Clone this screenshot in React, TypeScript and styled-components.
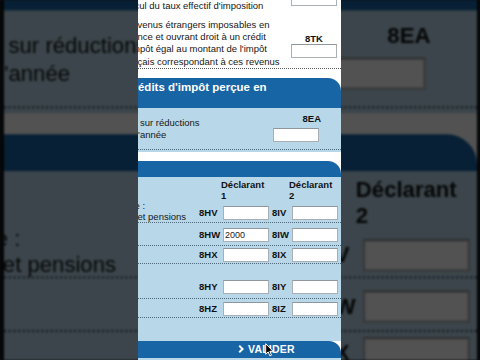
import React from "react";
import styled, { createGlobalStyle } from "styled-components";

const Global = createGlobalStyle`
  html, body { margin: 0; padding: 0; background: #000; }
  body { font-family: "Liberation Sans", Arial, Helvetica, sans-serif; }
`;

const NAVY = "#1865a6";
const LIGHT = "#b8d8ea";

const Screen = styled.div`
  position: relative;
  width: 480px;
  height: 360px;
  overflow: hidden;
  background: #0c0f12;
  display: flex;
  padding-left: 138px;
  box-sizing: border-box;
`;

const Backdrop = styled.div`
  position: absolute;
  inset: 0;
  overflow: hidden;
  background: #0c0f12;
  filter: blur(1px) brightness(0.32);
`;

const BackdropScale = styled.div`
  position: absolute;
  left: 3.5px;
  top: -240.6px;
  transform-origin: 0 0;
  transform: scale(2.33);
`;

const Frame = styled.div<{ $clip?: boolean }>`
  position: relative;
  flex: none;
  width: 203px;
  height: 360px;
  background: #fff;
  overflow: ${(p) => (p.$clip ? "hidden" : "visible")};
  font-family: "Liberation Sans", Arial, Helvetica, sans-serif;
  font-size: 9.5px;
  color: #161616;
  z-index: 1;
`;

const Page = styled.div`
  display: flex;
  flex-direction: column;
  margin-top: -14px;
`;

const Row = styled.div<{ $h: number; $dots?: string }>`
  display: flex;
  justify-content: space-between;
  align-items: flex-start;
  height: ${(p) => p.$h}px;
  border-bottom: ${(p) => (p.$dots ? `1px dotted ${p.$dots}` : "none")};
`;

const TextBlock = styled.div<{ $pt: number; $lh: number }>`
  flex: 1;
  padding-top: ${(p) => p.$pt}px;
  line-height: ${(p) => p.$lh}px;
  white-space: nowrap;
`;

const Line = styled.span<{ $indent: number }>`
  display: block;
  margin-left: ${(p) => p.$indent}px;
`;

const RightCol = styled.div<{ $w: number; $mr: number; $align: string }>`
  flex: none;
  width: ${(p) => p.$w}px;
  margin-right: ${(p) => p.$mr}px;
  display: flex;
  flex-direction: column;
  align-items: ${(p) => p.$align};
`;

const Code = styled.div<{ $mt: number }>`
  margin-top: ${(p) => p.$mt}px;
  font-weight: bold;
  font-size: 9.5px;
  line-height: 11px;
  color: #111;
`;

const Field = styled.div<{ $mt: number; $self?: string }>`
  margin-top: ${(p) => p.$mt}px;
  align-self: ${(p) => p.$self || "auto"};
  width: 46px;
  height: 14px;
  box-sizing: border-box;
  background: #fff;
  border: 1px solid #a9b0b5;
  border-top-color: #8f979d;
  font-size: 9px;
  line-height: 12px;
  padding-left: 1px;
  color: #222;
`;

const Header = styled.div<{ $h: number; $mt: number }>`
  margin-top: ${(p) => p.$mt}px;
  height: ${(p) => p.$h}px;
  box-sizing: border-box;
  padding-top: 2px;
  background: ${NAVY};
  border-top-right-radius: 13px;
  color: #fff;
  font-weight: bold;
  font-size: 11.5px;
  line-height: 14px;
  white-space: nowrap;
`;

const Panel = styled.div<{ $pb: number }>`
  background: ${LIGHT};
  padding-bottom: ${(p) => p.$pb}px;
  display: flex;
  flex-direction: column;
`;

const GridRow = styled.div<{ $h: number; $dots?: boolean }>`
  display: grid;
  grid-template-columns: 59px 26px 46px 23px 46px 3px;
  align-items: start;
  height: ${(p) => p.$h}px;
  border-bottom: ${(p) => (p.$dots ? "1px dotted #4f687c" : "none")};
`;

const CellText = styled.div`
  line-height: 11.5px;
  white-space: nowrap;
`;

const GridLabel = styled.div<{ $mt: number; $pl: number }>`
  margin-top: ${(p) => p.$mt}px;
  padding-left: ${(p) => p.$pl}px;
  font-weight: bold;
  line-height: 14px;
  color: #111;
  white-space: nowrap;
`;

const ColHead = styled.div<{ $ml: number }>`
  margin-left: ${(p) => p.$ml}px;
  padding-top: 2.5px;
  font-weight: bold;
  line-height: 11px;
  color: #111;
  white-space: nowrap;
`;

const Bar = styled.div`
  height: 17px;
  background: ${NAVY};
  border-top-right-radius: 12px;
  display: flex;
  align-items: center;
  gap: 4px;
  padding-left: 100px;
  color: #fff;
  font-weight: bold;
  font-size: 10.5px;
  letter-spacing: 0.2px;
`;

const Tail = styled.div`
  height: 10px;
  background: ${LIGHT};
`;

const Cursor = styled.svg`
  position: absolute;
  left: 127px;
  top: 343px;
`;

type RowDef = { h: number; mt: number; l1: string; l2: string; v?: string; text?: React.ReactNode };

const rows: RowDef[] = [
  {
    h: 22,
    mt: 6,
    l1: "8HV",
    l2: "8IV",
    text: (
      <>
        <Line $indent={-3.5}>e :</Line>
        <Line $indent={-0.5}>et pensions</Line>
      </>
    ),
  },
  { h: 22, mt: 5, l1: "8HW", l2: "8IW", v: "2000" },
  { h: 17, mt: 2, l1: "8HX", l2: "8IX" },
  { h: 34, mt: 16, l1: "8HY", l2: "8IY" },
  { h: 18, mt: 3, l1: "8HZ", l2: "8IZ" },
];

function FormContent() {
  return (
    <Page>
      <Row $h={31}>
        <TextBlock $pt={1.5} $lh={12.3}>
          <Line $indent={-2}>nus exonérés retenus pour le</Line>
          <Line $indent={-3.5}>cul du taux effectif d'imposition</Line>
        </TextBlock>
        <RightCol $w={46} $mr={4} $align="center">
          <Field $mt={6} />
        </RightCol>
      </Row>
      <Row $h={50.7} $dots="#555">
        <TextBlock $pt={1.8} $lh={12.3}>
          <Line $indent={-0.5}>venus étrangers imposables en</Line>
          <Line $indent={-0.5}>nce et ouvrant droit à un crédit</Line>
          <Line $indent={-6}>mpôt égal au montant de l'impôt</Line>
          <Line $indent={-0.5}>çais correspondant à ces revenus</Line>
        </TextBlock>
        <RightCol $w={46} $mr={4} $align="center">
          <Code $mt={15.5}>8TK</Code>
          <Field $mt={0.5} />
        </RightCol>
      </Row>

      <Header $h={30} $mt={9.3}>
        <Line $indent={-4.5}>rédits d'impôt perçue en</Line>
      </Header>
      <Panel $pb={2}>
        <Row $h={41} $dots="#4f687c">
          <TextBlock $pt={9.25} $lh={11.5}>
            <Line $indent={-6}>e sur réductions</Line>
            <Line $indent={-2}>l'année</Line>
          </TextBlock>
          <RightCol $w={48} $mr={20} $align="flex-end">
            <Code $mt={5.5}>8EA</Code>
            <Field $mt={3.5} $self="flex-start" />
          </RightCol>
        </Row>
      </Panel>

      <Header $h={16} $mt={9} />
      <Panel $pb={23}>
        <GridRow $h={23}>
          <div />
          <div />
          <ColHead $ml={-2}>
            Déclarant
            <br />1
          </ColHead>
          <div />
          <ColHead $ml={-3}>
            Déclarant
            <br />2
          </ColHead>
        </GridRow>
        {rows.map((r) => (
          <GridRow key={r.l1} $h={r.h} $dots>
            <CellText>{r.text}</CellText>
            <GridLabel $mt={r.mt} $pl={2}>
              {r.l1}
            </GridLabel>
            <Field $mt={r.mt}>{r.v}</Field>
            <GridLabel $mt={r.mt} $pl={3}>
              {r.l2}
            </GridLabel>
            <Field $mt={r.mt} />
          </GridRow>
        ))}
      </Panel>
      <Bar>
        <svg width="6" height="8" viewBox="0 0 6 8">
          <polyline points="1.2,0.8 4.6,4 1.2,7.2" fill="none" stroke="#fff" strokeWidth="2" />
        </svg>
        <span>VALIDER</span>
      </Bar>
      <Tail />
    </Page>
  );
}

export default function App() {
  return (
    <Screen>
      <Global />
      <Backdrop>
        <BackdropScale>
          <Frame>
            <FormContent />
          </Frame>
        </BackdropScale>
      </Backdrop>
      <Frame $clip>
        <FormContent />
        <Cursor width="9" height="14" viewBox="0 0 9 14">
          <path
            d="M0.7 0.7 L0.7 11.2 L3.2 8.9 L4.9 12.9 L6.5 12.2 L4.8 8.3 L8.1 8.3 Z"
            fill="#000"
            stroke="#fff"
            strokeWidth="1"
            strokeLinejoin="round"
          />
        </Cursor>
      </Frame>
    </Screen>
  );
}
